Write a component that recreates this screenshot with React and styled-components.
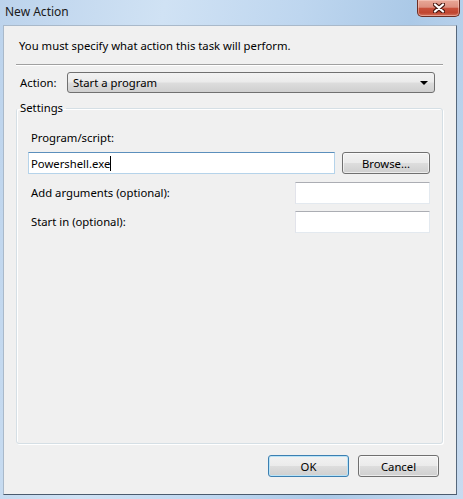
import React from "react";
import styled, { createGlobalStyle } from "styled-components";

const GlobalStyle = createGlobalStyle`
  html, body {
    margin: 0;
    padding: 0;
    background: #c5daf0;
  }
  body {
    font-family: "Noto Sans", "Open Sans", sans-serif;
    font-size: 11.3px;
    color: #000;
  }
  * {
    box-sizing: border-box;
  }
`;

const Window = styled.div`
  width: 463px;
  height: 499px;
  display: flex;
  flex-direction: column;
  padding: 0 6px 4px 3px;
  background: linear-gradient(
    100deg,
    #bcd3ec 0%,
    #d0e2f4 30%,
    #bed6ef 55%,
    #abc9e7 75%,
    #c8dbf0 100%
  );
`;

const TitleBar = styled.div`
  height: 25px;
  flex: none;
  display: flex;
  align-items: flex-start;
  justify-content: space-between;
  margin-right: -3px;
`;

const Title = styled.div`
  padding-left: 2px;
  line-height: 24px;
  font-size: 12px;
  color: #1a1a1a;
`;

const CloseButton = styled.div`
  width: 43px;
  height: 17px;
  display: flex;
  align-items: center;
  justify-content: center;
  border: 1px solid #6d2e24;
  border-top: none;
  border-radius: 0 0 5px 5px;
  background: linear-gradient(
    #e8a898 0%,
    #dd8f7f 45%,
    #c8513c 52%,
    #c04630 80%,
    #d47460 100%
  );
  box-shadow: inset 0 0 0 1px rgba(255, 220, 210, 0.45);
`;

const Client = styled.div`
  flex: 1;
  display: flex;
  flex-direction: column;
  background: #f0f0f0;
  border: 1px solid;
  border-color: #a9b9ca #56687c #4b5b6e #a9b9ca;
  padding: 12px 13px 0 12px;
`;

const Intro = styled.div`
  margin-left: 3px;
  line-height: 16px;
`;

const Separator = styled.div`
  margin-top: 10px;
  border-top: 1px solid #a0a0a0;
  border-bottom: 1px solid #ffffff;
`;

const ActionRow = styled.div`
  margin-top: 6px;
  display: flex;
  align-items: center;
`;

const ActionLabel = styled.div`
  width: 51px;
  padding-left: 4px;
  line-height: 16px;
`;

const ComboBox = styled.div`
  width: 368px;
  height: 21px;
  display: flex;
  align-items: center;
  justify-content: space-between;
  padding: 0 6px 0 5px;
  border: 1px solid #707070;
  border-radius: 3px;
  background: linear-gradient(#f2f2f2 0%, #ebebeb 48%, #dddddd 52%, #cfcfcf 100%);
`;

const Arrow = styled.span`
  width: 0;
  height: 0;
  border-left: 4px solid transparent;
  border-right: 4px solid transparent;
  border-top: 4px solid #000;
`;

const Group = styled.fieldset`
  flex: 1;
  min-height: 0;
  margin: 7px 0 0 0;
  padding: 0;
  border: 1px solid #d5dfe5;
  border-radius: 3px;
  box-shadow: inset 1px 1px 0 #ffffff, 1px 1px 0 #ffffff;
`;

const Legend = styled.legend`
  padding: 0 3px;
  line-height: 16px;
`;

const GroupBody = styled.div`
  padding: 14px 12px 0 11px;
  display: flex;
  flex-direction: column;
`;

const FieldLabel = styled.div`
  margin-left: 3px;
  line-height: 16px;
`;

const FieldRow = styled.div`
  margin-top: ${(p) => p.$gap}px;
  display: flex;
  align-items: center;
  justify-content: space-between;
`;

const TextField = styled.div`
  width: ${(p) => p.$width}px;
  height: 22px;
  display: flex;
  align-items: center;
  padding-left: 2px;
  background: #ffffff;
  border: 1px solid;
  border-color: ${(p) =>
    p.$focused ? "#5b8fbc #b5d3ea #b5d3ea #b5d3ea" : "#abadb3 #e3e9ef #e3e9ef #e2e3ea"};
`;

const Caret = styled.span`
  display: inline-block;
  width: 1px;
  height: 15px;
  background: #000;
`;

const Button = styled.div`
  width: ${(p) => p.$width}px;
  height: 22px;
  display: flex;
  align-items: center;
  justify-content: center;
  border: 1px solid ${(p) => (p.$default ? "#3c7fb1" : "#707070")};
  border-radius: 3px;
  background: linear-gradient(#f2f2f2 0%, #ebebeb 48%, #dddddd 52%, #cfcfcf 100%);
  box-shadow: ${(p) =>
    p.$default ? "inset 0 0 0 1px #b9e3f7" : "inset 0 0 0 1px rgba(255,255,255,0.6)"};
`;

const Footer = styled.div`
  flex: none;
  display: flex;
  justify-content: flex-end;
  gap: 9px;
  padding: 11px 4px 17px 0;
`;

const CloseGlyph = () => (
  <svg width="12" height="10" viewBox="0 0 12 10">
    <path d="M2 1.5 L10 8.5 M10 1.5 L2 8.5" stroke="#4a1810" strokeWidth="4.4" strokeLinecap="round" />
    <path d="M2 1.5 L10 8.5 M10 1.5 L2 8.5" stroke="#ffffff" strokeWidth="2.3" strokeLinecap="round" />
  </svg>
);

const App = () => {
  return (
    <>
      <GlobalStyle />
      <Window>
        <TitleBar>
          <Title>New Action</Title>
          <CloseButton>
            <CloseGlyph />
          </CloseButton>
        </TitleBar>
        <Client>
          <Intro>You must specify what action this task will perform.</Intro>
          <Separator />
          <ActionRow>
            <ActionLabel>Action:</ActionLabel>
            <ComboBox>
              <span>Start a program</span>
              <Arrow />
            </ComboBox>
          </ActionRow>
          <Group>
            <Legend>Settings</Legend>
            <GroupBody>
              <FieldLabel>Program/script:</FieldLabel>
              <FieldRow $gap={6}>
                <TextField $width={307} $focused>
                  Powershell.exe
                  <Caret />
                </TextField>
                <Button $width={88}>Browse...</Button>
              </FieldRow>
              <FieldRow $gap={8}>
                <FieldLabel>Add arguments (optional):</FieldLabel>
                <TextField $width={135} />
              </FieldRow>
              <FieldRow $gap={7}>
                <FieldLabel>Start in (optional):</FieldLabel>
                <TextField $width={135} />
              </FieldRow>
            </GroupBody>
          </Group>
          <Footer>
            <Button $width={81} $default>
              OK
            </Button>
            <Button $width={81}>Cancel</Button>
          </Footer>
        </Client>
      </Window>
    </>
  );
};

export default App;
